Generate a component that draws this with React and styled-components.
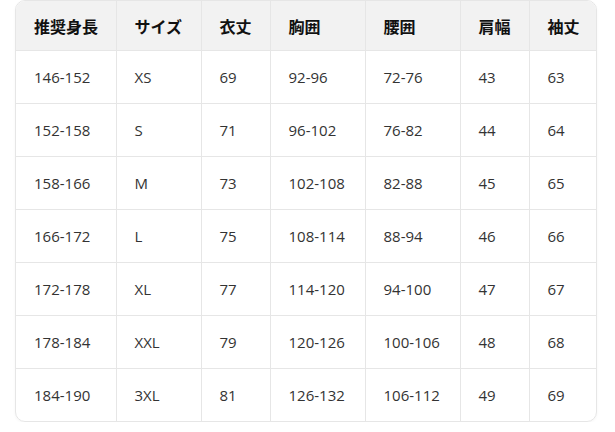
import styled, { createGlobalStyle } from 'styled-components';

const GlobalStyle = createGlobalStyle`
  body {
    margin: 0;
    background: #ffffff;
    font-family: "Open Sans", "Noto Sans CJK JP", sans-serif;
  }
`;

const Wrapper = styled.div`
  width: 582px;
  margin-left: 15px;
  border: 1px solid #e6e6e6;
  border-radius: 10px;
  overflow: hidden;
  box-shadow: 0 1px 3px rgba(0, 0, 0, 0.04);
  box-sizing: border-box;
`;

const Table = styled.table`
  width: 100%;
  border-collapse: collapse;
  table-layout: fixed;
`;

const HeadCell = styled.th`
  height: 49px;
  padding: 0 0 0 18px;
  text-align: left;
  background: #f2f2f2;
  color: #111;
  font-family: "Noto Sans CJK JP", sans-serif;
  font-size: 16px;
  font-weight: 700;
  border-right: 1px solid #e6e6e6;
  border-bottom: 1px solid #e6e6e6;
  &:last-child {
    border-right: none;
  }
`;

const Cell = styled.td`
  height: 52px;
  padding: 0 0 0 18px;
  color: #333;
  font-size: 15px;
  border-right: 1px solid #e6e6e6;
  border-bottom: 1px solid #e6e6e6;
  &:last-child {
    border-right: none;
  }
`;

const Row = styled.tr`
  &:last-child td {
    border-bottom: none;
  }
`;

const widths = [100, 85, 69, 95, 95, 69, 69];
const headers = ['推奨身長', 'サイズ', '衣丈', '胸囲', '腰囲', '肩幅', '袖丈'];
const rows = [
  ['146-152', 'XS', '69', '92-96', '72-76', '43', '63'],
  ['152-158', 'S', '71', '96-102', '76-82', '44', '64'],
  ['158-166', 'M', '73', '102-108', '82-88', '45', '65'],
  ['166-172', 'L', '75', '108-114', '88-94', '46', '66'],
  ['172-178', 'XL', '77', '114-120', '94-100', '47', '67'],
  ['178-184', 'XXL', '79', '120-126', '100-106', '48', '68'],
  ['184-190', '3XL', '81', '126-132', '106-112', '49', '69'],
];

const App = () => {
  return (
    <>
      <GlobalStyle />
      <Wrapper>
        <Table>
          <colgroup>
            {widths.map((w, i) => (
              <col key={i} style={{ width: w }} />
            ))}
          </colgroup>
          <thead>
            <tr>
              {headers.map((h) => (
                <HeadCell key={h}>{h}</HeadCell>
              ))}
            </tr>
          </thead>
          <tbody>
            {rows.map((r) => (
              <Row key={r[0]}>
                {r.map((v, i) => (
                  <Cell key={i}>{v}</Cell>
                ))}
              </Row>
            ))}
          </tbody>
        </Table>
      </Wrapper>
    </>
  );
};

export default App;
